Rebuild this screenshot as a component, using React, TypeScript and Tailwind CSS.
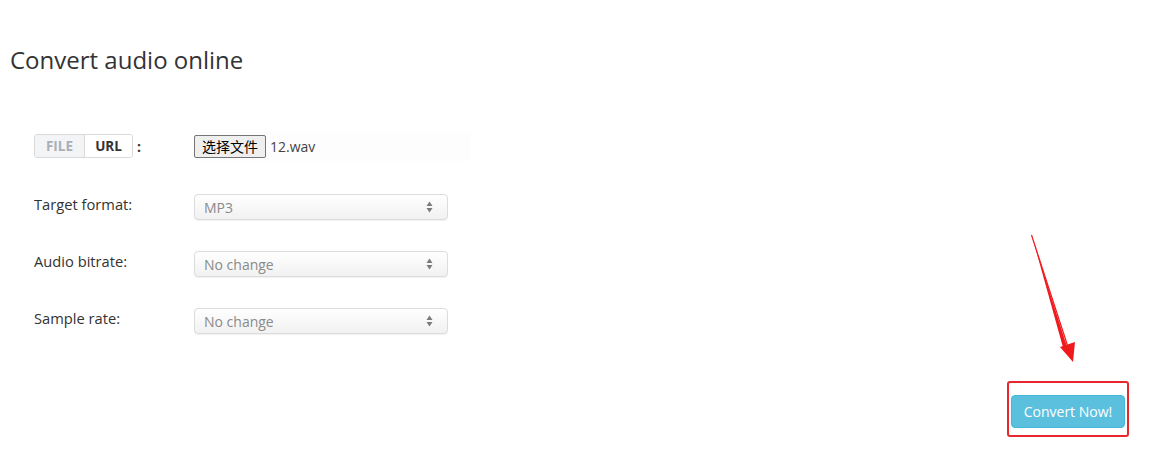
import React from 'react';

const font = { fontFamily: '"Open Sans", "Noto Sans CJK SC", sans-serif' };

function SelectBox({ value }: { value: string }) {
  return (
    <div className="flex h-[26px] w-[254px] items-center justify-between rounded-[4px] border border-[#dcdcdc] bg-gradient-to-b from-white to-[#f1f1f1] pl-[9px] pr-[14px] text-[14px] text-[#8a8a8a] shadow-[0_1px_1px_rgba(0,0,0,0.06)]">
      <span>{value}</span>
      <svg width="7" height="12" viewBox="0 0 7 12">
        <path d="M3.5 0.5 L6.5 5 L0.5 5 Z" fill="#7a7a7a" />
        <path d="M3.5 11.5 L6.5 7 L0.5 7 Z" fill="#7a7a7a" />
      </svg>
    </div>
  );
}

function Row({ label, children }: { label: string; children: React.ReactNode }) {
  return (
    <div className="flex items-start">
      <div className="w-[160px] text-[14.7px] leading-[20px] text-[#333]">{label}</div>
      {children}
    </div>
  );
}

export default function App() {
  return (
    <div className="relative h-[457px] w-[1165px] overflow-hidden bg-white" style={font}>
      <h1 className="pl-[10px] pt-[45px] text-[24px] font-normal leading-[30px] text-[#333]">
        Convert audio online
      </h1>

      <div className="mt-[56px] flex flex-col gap-[33px] pl-[34px]">
        <div className="flex items-center">
          <div className="flex w-[160px] items-center">
            <div className="flex h-[24px] overflow-hidden rounded-[3px] border border-[#d9d9d9] text-[13.5px] font-bold">
              <span className="flex w-[49px] items-center justify-center bg-[#f3f4f6] text-[#a9b0b8]">FILE</span>
              <span className="flex w-[48px] items-center justify-center border-l border-[#d9d9d9] bg-white text-[#333]">URL</span>
            </div>
            <span className="ml-[4px] text-[14px] font-bold text-[#333]">:</span>
          </div>
          <div className="flex h-[30px] w-[277px] items-center bg-[#fdfdfd]">
            <span
              className="flex h-[23px] items-center rounded-[2px] border border-[#767676] bg-[#efefef] px-[7px] text-[14px] text-black"
              style={{ fontFamily: '"Noto Sans CJK SC", sans-serif' }}
            >
              选择文件
            </span>
            <span className="ml-[4px] text-[14px] text-[#444]" style={{ fontFamily: '"Open Sans", sans-serif' }}>
              12.wav
            </span>
          </div>
        </div>

        <div className="flex flex-col gap-[31px]">
          <Row label="Target format:">
            <SelectBox value="MP3" />
          </Row>
          <Row label="Audio bitrate:">
            <SelectBox value="No change" />
          </Row>
          <Row label="Sample rate:">
            <SelectBox value="No change" />
          </Row>
        </div>
      </div>

      <div className="mt-[47px] flex justify-end pr-[36px]">
        <div className="rounded-[3px] border-[2px] border-[#e8262b] px-[2px] pb-[7px] pt-[12px]">
          <button className="flex h-[33px] w-[114px] items-center justify-center rounded-[4px] border border-[#46b8da] bg-[#5bc0de] text-[14px] text-white">
            Convert Now!
          </button>
        </div>
      </div>

      <svg className="pointer-events-none absolute left-0 top-0" width="1165" height="457">
        <path d="M1032 236 L1068 350 L1064 351 Z" fill="#f0191c" />
        <path d="M1031.5 235 L1069 350" stroke="#f0191c" strokeWidth="1.2" />
        <path d="M1060 347 L1073 362 L1075 342 Z" fill="#f0191c" />
      </svg>
    </div>
  );
}
